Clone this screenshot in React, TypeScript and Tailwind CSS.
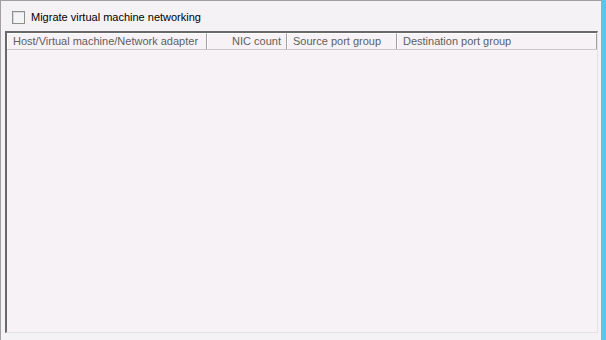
const columns = [
  { label: "Host/Virtual machine/Network adapter", width: "w-[200px]", align: "text-left" },
  { label: "NIC count", width: "w-[80px]", align: "text-right" },
  { label: "Source port group", width: "w-[110px]", align: "text-left" },
  { label: "Destination port group", width: "flex-1", align: "text-left" },
];

export default function App() {
  return (
    <div className="flex h-[340px] w-[606px] overflow-hidden bg-[#f4f2f4] font-['Liberation_Sans',Arial,sans-serif] text-[11px]">
      <div className="flex h-full flex-1 flex-col border-l border-t border-[#a0a0a0] bg-[#f4f2f4]">
        {/* Migrate checkbox */}
        <label className="ml-[11px] mt-[9px] flex items-center gap-[6px] text-[#000]">
          <span className="block h-[13px] w-[13px] border border-[#8e8f8f] bg-[#f4f4f4] shadow-[inset_1px_1px_0_#d8d8d8]" />
          <span className="leading-[14px]">Migrate virtual machine networking</span>
        </label>

        {/* List view */}
        <div className="ml-[4px] mt-[7px] flex h-[302px] w-[593px] flex-col border-l-2 border-t-2 border-[#696969] border-b-[#e3e3e3] border-r-[#e3e3e3] border-b border-r bg-[#f6f2f6]">
          <div className="flex h-[17px] border-b border-[#c8c8c8] bg-[#f6f2f6]">
            {columns.map((col) => (
              <div
                key={col.label}
                className={`${col.width} ${col.align} border-l border-t border-white border-r border-r-[#a0a0a0] px-[5px] leading-[15px] text-[#5f5f5f]`}
              >
                {col.label}
              </div>
            ))}
          </div>
          <div className="flex-1" />
        </div>
      </div>
      <div className="h-full w-[5px] bg-[#5bc6ec]" />
    </div>
  );
}
